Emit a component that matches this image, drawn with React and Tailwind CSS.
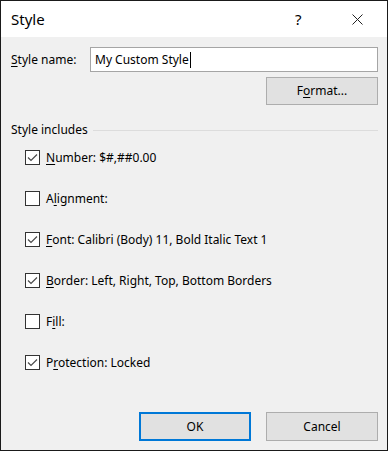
import React from "react";

const Check = ({ checked }) => (
  <div className="w-[15px] h-[15px] border border-[#333333] bg-white flex items-center justify-center shrink-0">
    {checked && (
      <svg width="11" height="9" viewBox="0 0 11 9">
        <path d="M1 4.5 L4 7.5 L10 1.5" fill="none" stroke="#4a4a4a" strokeWidth="1.2" />
      </svg>
    )}
  </div>
);

const U = ({ children }) => <span className="underline underline-offset-2">{children}</span>;

const Row = ({ checked, children }) => (
  <div className="h-[41px] flex items-center pl-[24px]">
    <Check checked={checked} />
    <span className="ml-[6px] text-[12px] text-black">{children}</span>
  </div>
);

export default function App() {
  return (
    <div
      className="w-[388px] h-[451px] border border-[#1a1a1a] flex flex-col bg-[#f0f0f0] overflow-hidden"
      style={{ fontFamily: '"Noto Sans", "Open Sans", sans-serif' }}
    >
      <div className="h-[36px] bg-white flex items-center shrink-0 relative">
        <span className="ml-[10px] text-[15px] text-black">Style</span>
        <span className="absolute left-[294px] top-[7px] text-[15px] text-black">?</span>
        <svg className="absolute left-[351px] top-[13px]" width="11" height="11" viewBox="0 0 11 11">
          <path d="M0.5 0.5 L10.5 10.5 M10.5 0.5 L0.5 10.5" stroke="#222" strokeWidth="1" />
        </svg>
      </div>
      <div className="flex-1 flex flex-col">
        <div className="flex items-center mt-[10px] pl-[10px]">
          <span className="text-[12px] text-black w-[79px]">
            <U>S</U>tyle name:
          </span>
          <div className="w-[288px] h-[25px] border border-[#a5a5a5] bg-white flex items-center pl-[4px] text-[12px] text-black">
            My Custom Style
            <span className="inline-block w-[1px] h-[16px] bg-black ml-[1px]"></span>
          </div>
        </div>
        <div className="flex justify-end pr-[9px] mt-[5px]">
          <div className="w-[112px] h-[28px] border border-[#adadad] bg-[#e1e1e1] flex items-center justify-center text-[12px] text-black">
            F<U>o</U>rmat...
          </div>
        </div>
        <div className="flex items-center pl-[10px] pr-[9px] mt-[17px] h-[16px]">
          <span className="text-[12px] leading-[16px] text-black">Style includes</span>
          <div className="flex-1 h-[1px] bg-[#dcdcdc] ml-[5px]"></div>
        </div>
        <div className="flex flex-col -mt-[1px]">
          <Row checked>
            <U>N</U>umber: $#,##0.00
          </Row>
          <Row>
            A<U>l</U>ignment:
          </Row>
          <Row checked>
            <U>F</U>ont: Calibri (Body) 11, Bold Italic Text 1
          </Row>
          <Row checked>
            <U>B</U>order: Left, Right, Top, Bottom Borders
          </Row>
          <Row>
            F<U>i</U>ll:
          </Row>
          <Row checked>
            P<U>r</U>otection: Locked
          </Row>
        </div>
        <div className="flex justify-end gap-[15px] pr-[9px] mt-auto mb-[9px]">
          <div className="w-[112px] h-[29px] border-2 border-[#0078d7] bg-[#e1e1e1] flex items-center justify-center text-[12px] text-black">
            OK
          </div>
          <div className="w-[112px] h-[29px] border border-[#adadad] bg-[#e1e1e1] flex items-center justify-center text-[12px] text-black">
            Cancel
          </div>
        </div>
      </div>
    </div>
  );
}
